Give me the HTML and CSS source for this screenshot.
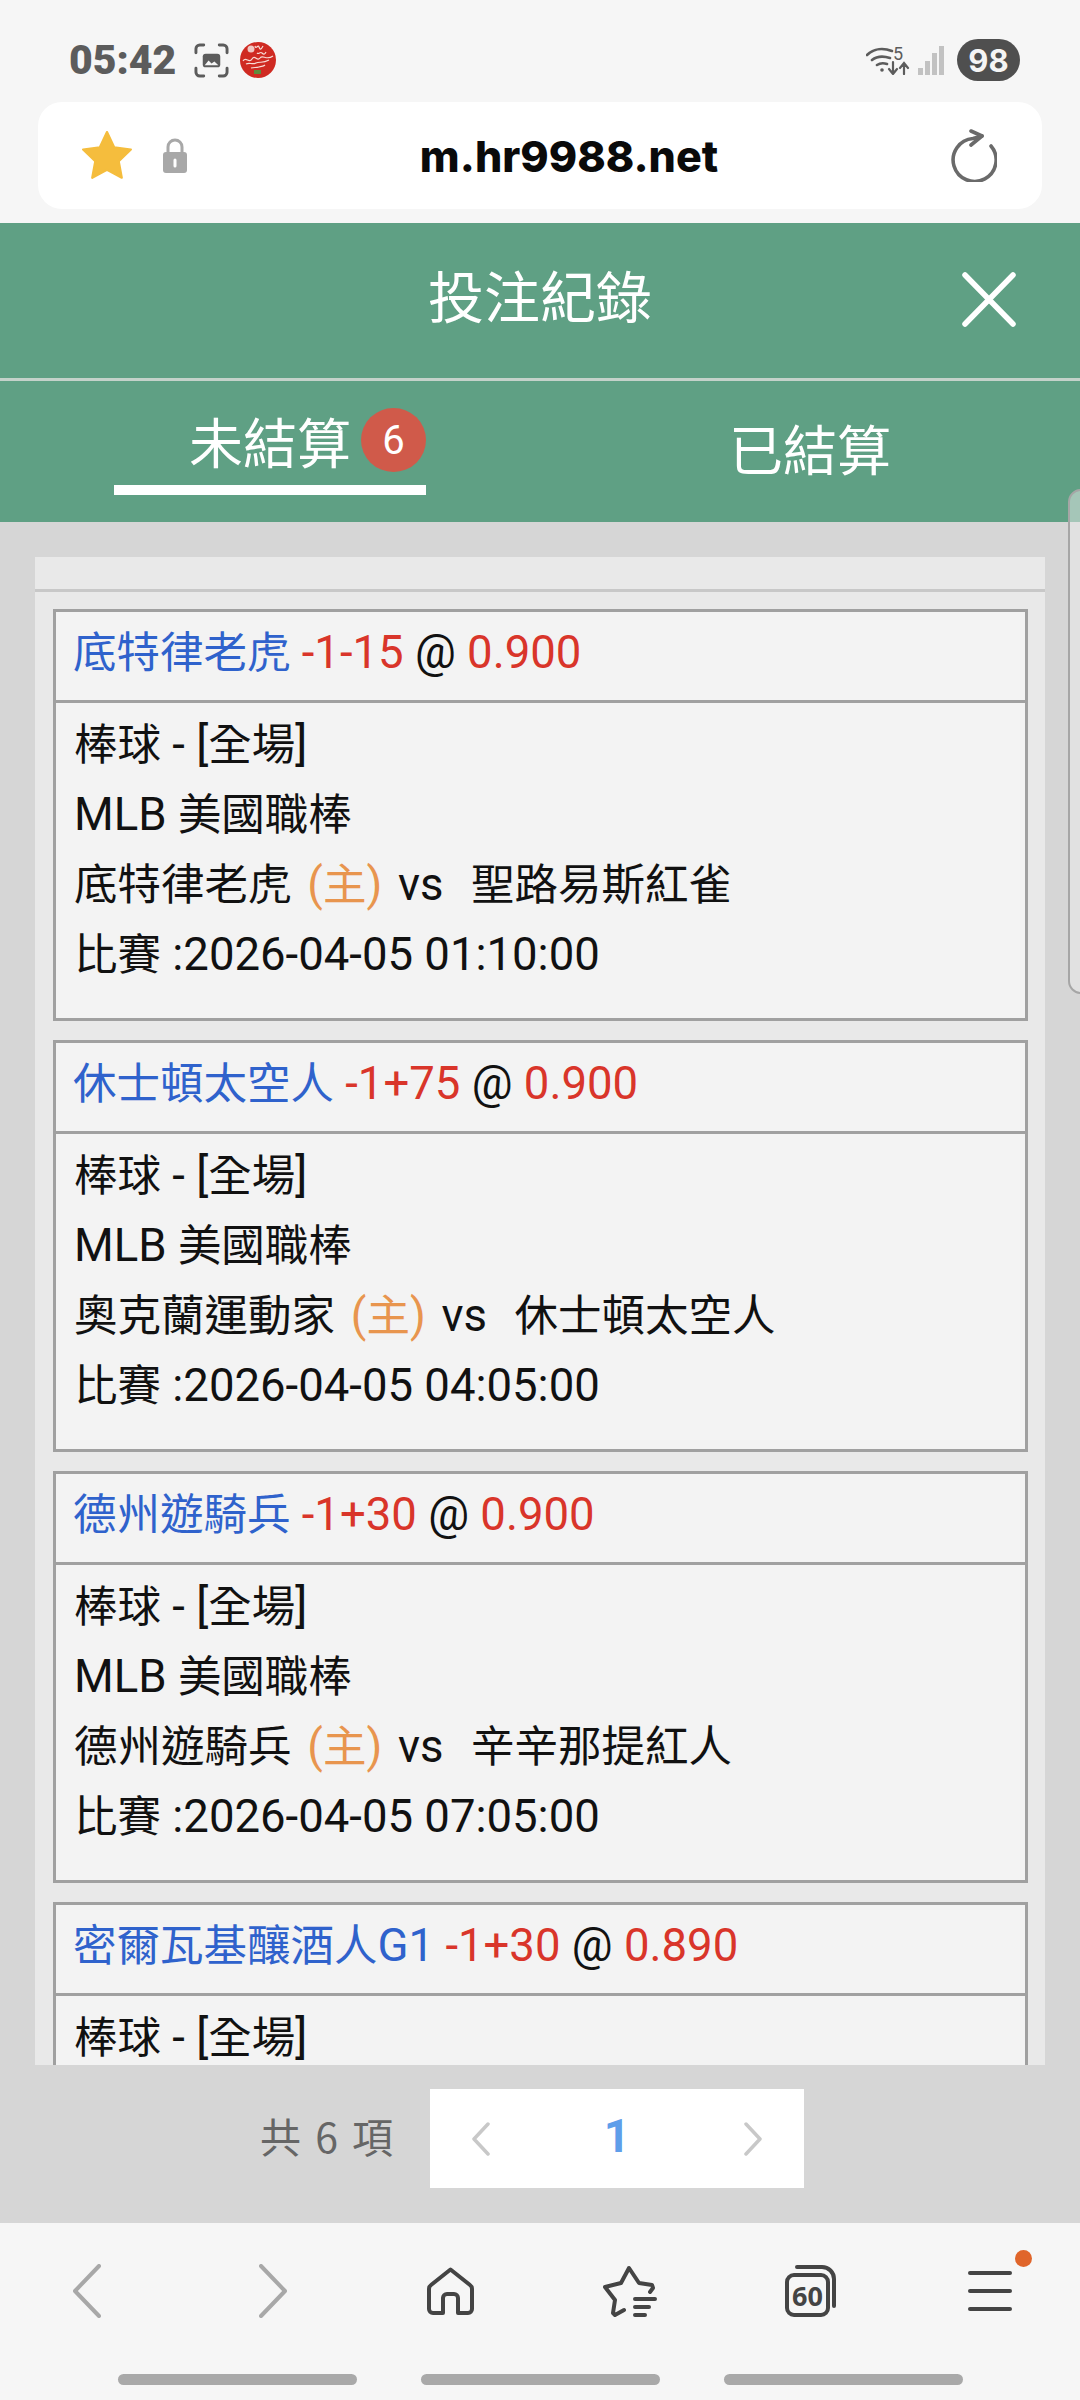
FILE: index.html
```html
<!DOCTYPE html>
<html>

<head>
    <meta charset="UTF-8">
    <title>投注紀錄</title>
    <link rel="stylesheet" href="styles.css">
</head>

<body>
    <div class="phone">
        <div class="status">
            <div class="status-left">
                <span class="clock">05:42</span>
                <svg class="shot" viewBox="0 0 36 36" fill="none" stroke="#5c5c5c" stroke-width="3" stroke-linecap="round">
                    <path d="M2 10V6a4 4 0 0 1 4-4h4M26 2h4a4 4 0 0 1 4 4v4M34 26v4a4 4 0 0 1-4 4h-4M10 34H6a4 4 0 0 1-4-4v-4" />
                    <rect x="9" y="11" width="18" height="14" rx="3" fill="#5c5c5c" stroke="none" />
                    <path d="M11 23l4-5 3 3 3-2 4 4z" fill="#f6f6f6" stroke="none" />
                </svg>
                <svg class="logo" viewBox="0 0 36 36">
                    <circle cx="18" cy="18" r="18" fill="#cf2a22" />
                    <circle cx="11" cy="7" r="3.500" fill="#f1c7c2" />
                    <path d="M15 4c1 4 3-2 4 1s2 3 4-1M17 11c2 2 3-2 5 0s3 1 4-1M3 19c3-5 6 3 9-2s5 3 8-1 6 3 13-2M6 22c4-2 6 1 10-1s6 1 13-3M11 26c3-1 5 0 8-1s4 0 6-2" fill="none" stroke="#f7dcd6" stroke-width="1.200" />
                    <rect x="14" y="28" width="7" height="4" fill="#5f8a3c" />
                </svg>
            </div>
            <div class="status-right">
                <svg class="wifi" viewBox="0 0 44 30" fill="none" stroke="#5c5c5c" stroke-linecap="round">
                    <path d="M1 10C8 3 18 3 26 6M6 15c5-4 12-4 18-2M11 20c3-2 7-2 10-1" stroke-width="2.600" />
                    <circle cx="16" cy="25" r="1.800" fill="#5c5c5c" stroke="none" />
                    <path d="M27 17v11M23 24l4 5 4-5M38 29V19M34 23l4-5 4 5" stroke-width="2.200" />
                    <text x="27" y="15" class="wifi-num">5</text>
                </svg>
                <div class="signal">
                    <i class="s1"></i><i class="s2"></i><i class="s3"></i><i class="s4"></i>
                </div>
                <span class="battery">98</span>
            </div>
        </div>

        <div class="urlbar">
            <svg class="fav" viewBox="2 2 46 46">
                <path d="M25 3l6.600 14 15.400 2-11.200 10.800 2.800 15.200-13.600-7.400-13.600 7.400 2.800-15.200L3 19l15.400-2z" fill="#f5bd3d" stroke="#f5bd3d" stroke-width="2" stroke-linejoin="round" />
            </svg>
            <svg class="lock" viewBox="0 0 26 36">
                <path d="M6 16V9a7 7 0 0 1 14 0v7" fill="none" stroke="#a8a8a8" stroke-width="3" />
                <rect x="1" y="14" width="24" height="21" rx="3" fill="#a8a8a8" />
                <path d="M13 22v6" stroke="#fff" stroke-width="3" stroke-linecap="round" />
            </svg>
            <span class="url">m.hr9988.net</span>
            <svg class="reload" viewBox="0 0 47 53" fill="none" stroke="#6a6a6a" stroke-width="3.600" stroke-linecap="round" stroke-linejoin="round">
                <path d="M41 17A21.500 21.500 0 1 1 23 9.500L32 7" />
                <path d="M21 2l11 5-11 9" />
            </svg>
        </div>

        <div class="title-bar">
            <h1>投注紀錄</h1>
            <svg class="close" viewBox="0 0 54 55" stroke="#fff" stroke-width="5.500" stroke-linecap="round">
                <path d="M3 3l48 49M51 3L3 52" />
            </svg>
        </div>

        <div class="tabs">
            <div class="tab active">
                <span class="tab-label">未結算</span>
                <span class="count">6</span>
            </div>
            <div class="tab"><span class="tab-label">已結算</span></div>
        </div>

        <main class="content">
            <div class="panel">
                <div class="panel-head"></div>
                <div class="list">
                    <div class="card">
                        <div class="card-title"><span class="zh team">底特律老虎</span> <span class="red">-1-15</span> @ <span class="red">0.900</span></div>
                        <div class="card-body">
                            <p><span class="zh">棒球</span> - [<span class="zh">全場</span>]</p>
                            <p>MLB <span class="zh">美國職棒</span></p>
                            <p class="match"><span class="zh">底特律老虎</span> <span class="home">(<span class="zh">主</span>)</span> vs&nbsp; <span class="zh">聖路易斯紅雀</span></p>
                            <p><span class="zh">比賽</span> :2026-04-05 01:10:00</p>
                        </div>
                    </div>
                    <div class="card">
                        <div class="card-title"><span class="zh team">休士頓太空人</span> <span class="red">-1+75</span> @ <span class="red">0.900</span></div>
                        <div class="card-body">
                            <p><span class="zh">棒球</span> - [<span class="zh">全場</span>]</p>
                            <p>MLB <span class="zh">美國職棒</span></p>
                            <p class="match"><span class="zh">奧克蘭運動家</span> <span class="home">(<span class="zh">主</span>)</span> vs&nbsp; <span class="zh">休士頓太空人</span></p>
                            <p><span class="zh">比賽</span> :2026-04-05 04:05:00</p>
                        </div>
                    </div>
                    <div class="card">
                        <div class="card-title"><span class="zh team">德州遊騎兵</span> <span class="red">-1+30</span> @ <span class="red">0.900</span></div>
                        <div class="card-body">
                            <p><span class="zh">棒球</span> - [<span class="zh">全場</span>]</p>
                            <p>MLB <span class="zh">美國職棒</span></p>
                            <p class="match"><span class="zh">德州遊騎兵</span> <span class="home">(<span class="zh">主</span>)</span> vs&nbsp; <span class="zh">辛辛那提紅人</span></p>
                            <p><span class="zh">比賽</span> :2026-04-05 07:05:00</p>
                        </div>
                    </div>
                    <div class="card">
                        <div class="card-title"><span class="team"><span class="zh">密爾瓦基釀酒人</span>G1</span> <span class="red">-1+30</span> @ <span class="red">0.890</span></div>
                        <div class="card-body">
                            <p><span class="zh">棒球</span> - [<span class="zh">全場</span>]</p>
                            <p>MLB <span class="zh">美國職棒</span></p>
                        </div>
                    </div>
                </div>
            </div>
            <div class="pager">
                <span class="total">共 6 項</span>
                <div class="pages">
                    <svg class="arrow" viewBox="0 0 18 34" fill="none" stroke="#c8c8c8" stroke-width="3.500" stroke-linecap="round" stroke-linejoin="round">
                        <path d="M16 2L2 17l14 15" />
                    </svg>
                    <span class="page-num">1</span>
                    <svg class="arrow" viewBox="0 0 18 34" fill="none" stroke="#c8c8c8" stroke-width="3.500" stroke-linecap="round" stroke-linejoin="round">
                        <path d="M2 2l14 15L2 32" />
                    </svg>
                </div>
            </div>
        </main>

        <nav class="bottom">
            <div class="nav-icons">
                <svg class="nav-chev back" viewBox="0 0 28 54" fill="none" stroke="#a8a8a8" stroke-width="4" stroke-linecap="round" stroke-linejoin="round">
                    <path d="M26 2L2 27l24 25" />
                </svg>
                <svg class="nav-chev fwd" viewBox="0 0 28 54" fill="none" stroke="#a8a8a8" stroke-width="4" stroke-linecap="round" stroke-linejoin="round">
                    <path d="M2 2l24 25L2 52" />
                </svg>
                <svg class="nav-home" viewBox="0 0 47 48" fill="none" stroke="#444" stroke-width="4" stroke-linejoin="round">
                    <path d="M23.500 2.500L4 18a5 5 0 0 0-2 4v20a4 4 0 0 0 4 4h10V31a4 4 0 0 1 4-4h7a4 4 0 0 1 4 4v15h10a4 4 0 0 0 4-4V22a5 5 0 0 0-2-4z" />
                </svg>
                <svg class="nav-star" viewBox="0 0 54 52" fill="none" stroke="#444" stroke-width="4" stroke-linecap="round" stroke-linejoin="round">
                    <path d="M47 27l3-4-1-3-13-2L26 3 18 18 2 22l10 13-2 13 2 2 9-5" />
                    <path d="M32 34h20M32 42h14M32 50h10" />
                </svg>
                <svg class="nav-tabs" viewBox="0 0 51 52" fill="none" stroke="#444" stroke-width="4" stroke-linecap="round" stroke-linejoin="round">
                    <rect x="2" y="10" width="41" height="40" rx="7" />
                    <path d="M12 2h25a12 12 0 0 1 12 12v27" />
                    <text x="22.500" y="41" class="tabs-num">60</text>
                </svg>
                <div class="menu">
                    <i></i><i></i><i></i>
                    <b class="menu-dot"></b>
                </div>
            </div>
            <div class="gestures">
                <i></i><i></i><i></i>
            </div>
        </nav>

        <div class="edge-handle"></div>
    </div>
</body>

</html>
```

FILE: styles.css
```css
* {
    box-sizing: border-box;
}

body {
    margin: 0;
    font-family: Roboto, "Noto Sans CJK TC", sans-serif;
    color: #111;
}

.phone {
    position: relative;
    width: 1080px;
    height: 2400px;
    display: flex;
    flex-direction: column;
    background-color: #f6f6f6;
    overflow: hidden;
}

.status {
    height: 102px;
    padding: 18px 60px 0 69px;
    display: flex;
    justify-content: space-between;
    align-items: center;
    flex-shrink: 0;
}

.status-left,
.status-right {
    display: flex;
    align-items: center;
}

.clock {
    font-size: 41px;
    font-weight: 900;
    color: #5c5c5c;
    width: 125px;
}

.shot {
    width: 35px;
    height: 35px;
    margin-right: 11px;
}

.logo {
    width: 36px;
    height: 36px;
}

.wifi {
    width: 44px;
    height: 30px;
    margin-right: 8px;
}

.wifi-num {
    font-size: 18px;
    fill: #5c5c5c;
    stroke: none;
}

.signal {
    width: 27px;
    height: 29px;
    display: flex;
    align-items: flex-end;
    gap: 2px;
    margin-right: 12px;
}

.signal i {
    width: 5px;
    background-color: #c2c2c2;
}

.s1 { height: 7px; }
.s2 { height: 14px; }
.s3 { height: 22px; }
.s4 { height: 29px; }

.battery {
    width: 63px;
    height: 42px;
    border-radius: 21px;
    background-color: #4f4f4f;
    color: #f4f4f4;
    font-family: Inter, Roboto, sans-serif;
    font-size: 31px;
    font-weight: 700;
    display: flex;
    align-items: center;
    justify-content: center;
}

.urlbar {
    height: 107px;
    margin: 0 38px 14px;
    padding: 0 45px 0 44px;
    background-color: #fff;
    border-radius: 24px;
    display: flex;
    align-items: center;
    flex-shrink: 0;
}

.fav {
    width: 50px;
    height: 50px;
}

.lock {
    width: 26px;
    height: 36px;
    margin-left: 30px;
}

.url {
    flex: 1;
    text-align: center;
    font-family: Inter, Roboto, sans-serif;
    font-size: 43px;
    font-weight: 800;
    color: #0a0a0a;
}

.reload {
    width: 47px;
    height: 53px;
}

.title-bar {
    height: 158px;
    flex-shrink: 0;
    background-color: #5fa084;
    border-bottom: 3px solid #c4d2ca;
    padding-bottom: 14px;
    display: flex;
    align-items: center;
    justify-content: center;
    position: relative;
}

.title-bar h1 {
    margin: 0;
    font-family: "Noto Sans CJK TC", sans-serif;
    font-size: 56px;
    font-weight: 400;
    color: #fff;
}

.close {
    position: absolute;
    right: 64px;
    top: 49px;
    width: 54px;
    height: 55px;
}

.tabs {
    height: 141px;
    flex-shrink: 0;
    background-color: #5fa084;
    display: flex;
    padding-left: 114px;
}

.tab {
    height: 114px;
    padding-top: 18px;
    display: flex;
    align-items: center;
    color: #fff;
    white-space: nowrap;
}

.tab.active {
    width: 312px;
    padding-top: 14px;
    justify-content: flex-end;
    border-bottom: 10px solid #fff;
}

.tab + .tab {
    margin-left: 303px;
}

.tab-label {
    font-family: "Noto Sans CJK TC", sans-serif;
    font-size: 54px;
}

.count {
    width: 65px;
    height: 64px;
    margin-left: 10px;
    border-radius: 50%;
    background-color: #d05a4a;
    font-size: 40px;
    display: flex;
    align-items: center;
    justify-content: center;
}

.content {
    flex: 1;
    min-height: 0;
    background-color: #d6d6d6;
    display: flex;
    flex-direction: column;
    padding-top: 35px;
}

.panel {
    height: 1508px;
    margin: 0 35px;
    background-color: #e9e9e9;
    overflow: hidden;
    flex-shrink: 0;
}

.panel-head {
    height: 35px;
    border-bottom: 3px solid #c8c8c8;
}

.list {
    padding: 17px 17px 0 18px;
    display: flex;
    flex-direction: column;
    gap: 19px;
}

.card {
    border: 3px solid #a0a0a0;
    background-color: #f3f3f3;
    font-size: 45.500px;
    flex-shrink: 0;
}

.zh {
    font-size: 43.500px;
}

.card-title {
    height: 91px;
    padding: 0 17px;
    line-height: 82px;
    white-space: pre;
    border-bottom: 3px solid #a0a0a0;
}

.team {
    color: #2f62cc;
}

.red {
    color: #d9352a;
}

.card-body {
    height: 315px;
    padding: 7px 18px 0;
}

.card-body p {
    margin: 0;
    height: 70px;
    line-height: 70px;
    white-space: pre;
}

.card-body .match {
    word-spacing: 2.500px;
}

.home {
    color: #e8954e;
    margin: 0 2px;
}

.pager {
    height: 99px;
    margin-top: 24px;
    display: flex;
    align-items: center;
    padding-left: 260px;
}

.total {
    width: 170px;
    padding-bottom: 8px;
    font-family: "Noto Sans CJK TC", sans-serif;
    font-size: 41px;
    word-spacing: 5px;
    color: #666;
}

.pages {
    width: 374px;
    height: 99px;
    background-color: #fff;
    display: flex;
    align-items: center;
    justify-content: space-between;
    padding: 0 42px;
}

.arrow {
    width: 18px;
    height: 34px;
}

.page-num {
    padding-bottom: 6px;
    font-size: 46px;
    font-weight: 700;
    color: #5f9eea;
}

.bottom {
    height: 177px;
    flex-shrink: 0;
    background-color: #f6f6f6;
}

.nav-icons {
    height: 136px;
    display: grid;
    grid-template-columns: repeat(6, 180px);
    justify-items: center;
    align-items: center;
}

.nav-chev {
    width: 28px;
    height: 54px;
}

.back {
    margin-right: 6px;
}

.fwd {
    margin-left: 6px;
}

.nav-home {
    width: 47px;
    height: 48px;
}

.nav-star {
    width: 54px;
    height: 52px;
}

.nav-tabs {
    width: 51px;
    height: 52px;
}

.tabs-num {
    font-family: "Open Sans", Roboto, sans-serif;
    font-size: 27px;
    font-weight: 700;
    fill: #444;
    stroke: none;
    text-anchor: middle;
}

.menu {
    position: relative;
    width: 44px;
    display: flex;
    flex-direction: column;
    gap: 14px;
}

.menu i {
    height: 4px;
    background-color: #444;
    border-radius: 2px;
}

.menu-dot {
    position: absolute;
    right: -20px;
    top: -21px;
    width: 17px;
    height: 17px;
    border-radius: 50%;
    background-color: #e0652a;
}

.gestures {
    display: flex;
    margin-top: 15px;
    padding-left: 118px;
    gap: 64px;
}

.gestures i {
    width: 239px;
    height: 11px;
    border-radius: 6px;
    background-color: #a9a9a9;
}

.edge-handle {
    position: absolute;
    right: -14px;
    top: 489px;
    width: 26px;
    height: 505px;
    border: 2px solid #a6a6a6;
    border-radius: 14px;
    background-color: rgba(235, 235, 235, 0.5);
}
```
